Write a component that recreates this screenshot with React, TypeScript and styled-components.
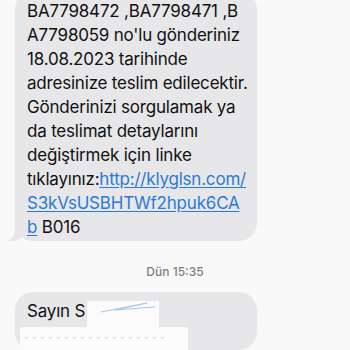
import * as React from "react";
import styled, { createGlobalStyle } from "styled-components";

const GlobalStyle = createGlobalStyle`
  html, body {
    margin: 0;
    padding: 0;
    background: #f9f9f9;
    overflow: hidden;
  }
`;

const SThread = styled.div`
  width: 350px;
  height: 350px;
  overflow: hidden;
  display: flex;
  flex-direction: column;
  align-items: flex-start;
  font-family: Inter, "Liberation Sans", sans-serif;
`;

const SBubble = styled.div<{ $tail?: boolean }>`
  position: relative;
  margin-left: 15px;
  width: 242px;
  box-sizing: border-box;
  padding: 8px 12px 8px 12px;
  background: #e7e7e9;
  border-radius: 18px;
  color: #111;
  font-size: 17px;
  line-height: 24px;
  letter-spacing: -0.2px;

  ${(p) =>
    p.$tail &&
    `
    &::before {
      content: "";
      position: absolute;
      left: -7px;
      bottom: 0;
      width: 20px;
      height: 20px;
      background: #e7e7e9;
      border-bottom-right-radius: 16px;
    }
    &::after {
      content: "";
      position: absolute;
      left: -10px;
      bottom: 0;
      width: 10px;
      height: 20px;
      background: #f9f9f9;
      border-bottom-right-radius: 10px;
    }
  `}
`;

const SFirstBubble = styled(SBubble)`
  margin-top: -9px;
  padding-bottom: 2px;
`;

const SLine = styled.div`
  position: relative;
  z-index: 1;
  white-space: nowrap;
`;

const SLink = styled.a`
  color: #2a7ad6;
  text-decoration: underline;
  text-underline-offset: 2px;
`;

const STime = styled.div`
  align-self: stretch;
  margin-top: 23px;
  margin-bottom: 12px;
  text-align: center;
  font-size: 12px;
  font-weight: 500;
  color: #7f7f83;
  line-height: 16px;
`;

const SSecondBubble = styled(SBubble)`
  height: 120px;
  padding-top: 7px;
`;

const SRedaction = styled.svg`
  position: absolute;
  left: 0;
  top: 0;
  z-index: 2;
  pointer-events: none;
`;

const lines: React.ReactNode[] = [
  "BA7798472 ,BA7798471 ,B",
  "A7798059 no'lu gönderiniz",
  "18.08.2023 tarihinde",
  "adresinize teslim edilecektir.",
  "Gönderinizi sorgulamak ya",
  "da teslimat detaylarını",
  "değiştirmek için linke",
  <>
    tıklayınız:<SLink>http://klyglsn.com/</SLink>
  </>,
  <SLink>S3kVsUSBHTWf2hpuk6CA</SLink>,
  <>
    <SLink>b</SLink> B016
  </>,
];

const App = () => {
  return (
    <SThread>
      <GlobalStyle />
      <SFirstBubble $tail>
        {lines.map((l, i) => (
          <SLine key={i}>{l}</SLine>
        ))}
      </SFirstBubble>
      <STime>Dün 15:35</STime>
      <SSecondBubble>
        <SLine>Sayın S</SLine>
        <SRedaction width="242" height="60" viewBox="0 0 242 60">
          <rect x="72" y="9" width="72" height="27" fill="#fbfbfb" />
          <rect x="5" y="35" width="168" height="25" fill="#fcfcfc" />
          <path d="M86 20 L132 11 L100 18 L140 15" stroke="#a9c8e6" strokeWidth="1" fill="none" />
          <path d="M10 46 L150 46" stroke="#dadadc" strokeWidth="1.5" strokeDasharray="3 5" />
        </SRedaction>
      </SSecondBubble>
    </SThread>
  );
};

export default App;
